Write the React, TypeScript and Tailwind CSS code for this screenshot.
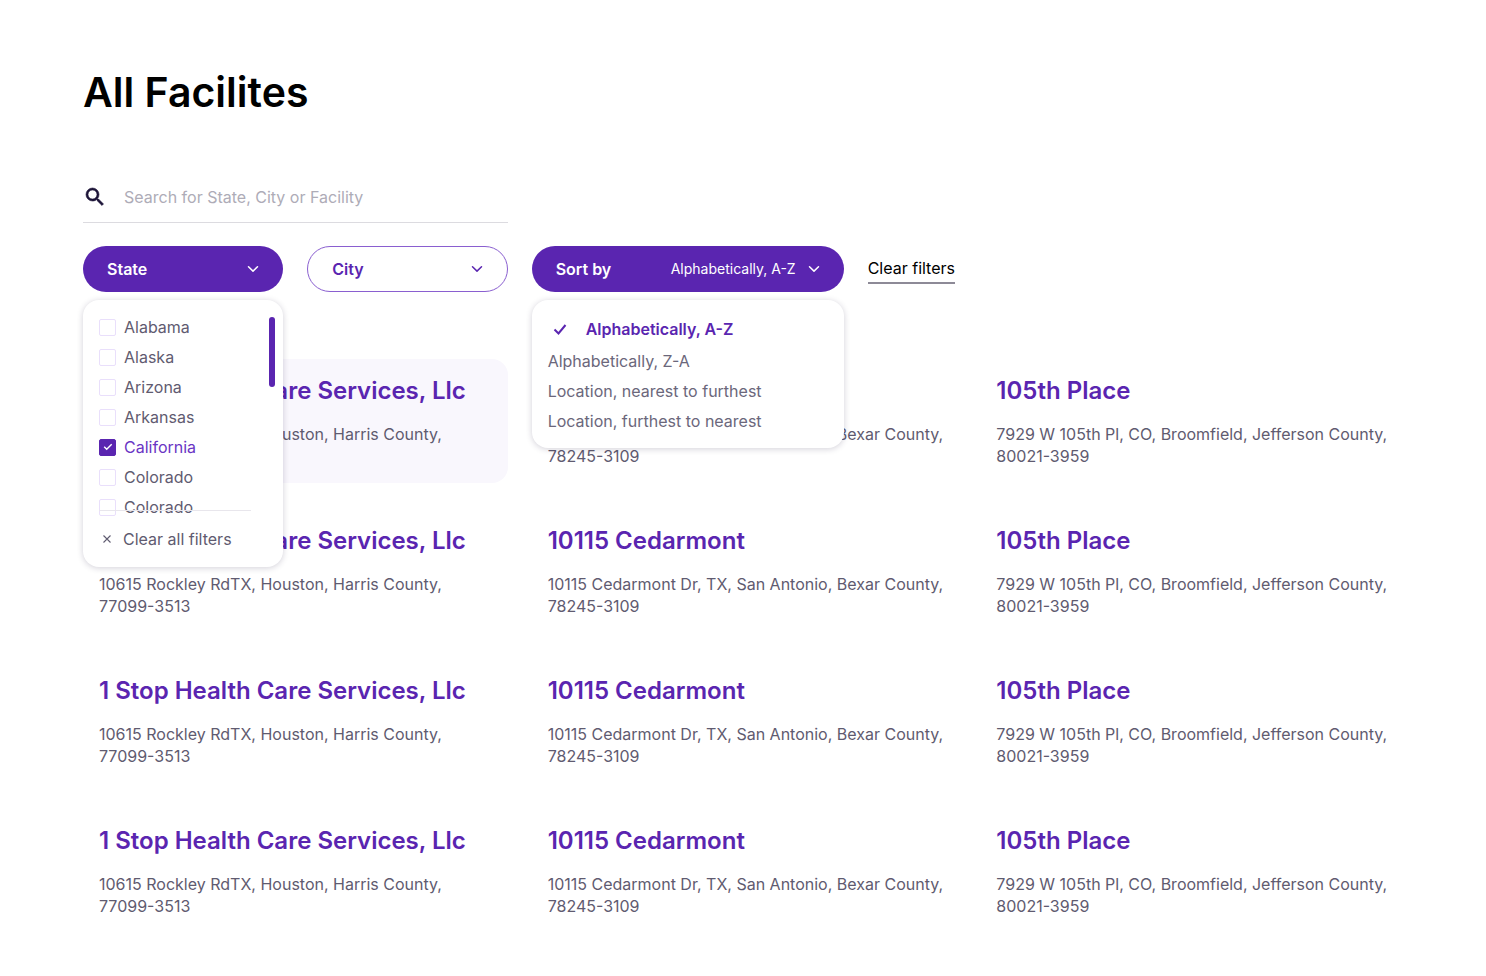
import React, { useState } from 'react';

interface Facility {
    name: string;
    address: string;
    zip: string;
}

const FACILITIES: Facility[] = [
    { name: '1 Stop Health Care Services, Llc', address: '10615 Rockley RdTX, Houston, Harris County,', zip: '77099-3513' },
    { name: '10115 Cedarmont', address: '10115 Cedarmont Dr, TX, San Antonio, Bexar County,', zip: '78245-3109' },
    { name: '105th Place', address: '7929 W 105th Pl, CO, Broomfield, Jefferson County,', zip: '80021-3959' },
];

const ROWS = [0, 1, 2, 3];

const STATES = ['Alabama', 'Alaska', 'Arizona', 'Arkansas', 'California', 'Colorado', 'Colorado'];

const SORT_OPTIONS = [
    'Alphabetically, A-Z',
    'Alphabetically, Z-A',
    'Location, nearest to furthest',
    'Location, furthest to nearest',
];

const ChevronIcon: React.FC = () => (
    <svg viewBox="0 0 12 8" className="w-3 h-2 shrink-0" fill="none" stroke="currentColor" strokeWidth="1.5" strokeLinecap="round" strokeLinejoin="round" aria-hidden="true">
        <path d="M1.5 1.8 6 6.1l4.5-4.3" />
    </svg>
);

const SearchIcon: React.FC = () => (
    <svg viewBox="0 0 24 24" className="w-6 h-6 shrink-0 text-[#1d1438]" fill="currentColor" stroke="currentColor" strokeWidth="0.6" aria-hidden="true">
        <path d="M15.5 14h-.79l-.28-.27A6.47 6.47 0 0 0 16 9.5 6.5 6.5 0 1 0 9.5 16c1.61 0 3.09-.59 4.23-1.57l.27.28v.79l5 4.99L20.49 19l-4.99-5zm-6 0C7.01 14 5 11.99 5 9.5S7.01 5 9.5 5 14 7.01 14 9.5 11.99 14 9.5 14z" />
    </svg>
);

const StateFilter: React.FC = () => {
    const [open, setOpen] = useState(true);
    const [checked, setChecked] = useState<number[]>([4]);

    const toggle = (index: number) => {
        setChecked(prev => (prev.includes(index) ? prev.filter(i => i !== index) : [...prev, index]));
    };

    return (
        <div className="relative">
            <button onClick={() => setOpen(!open)} aria-expanded={open} className="flex h-[46px] w-full items-center justify-between rounded-full bg-[#5a25b0] px-6 text-base font-semibold text-white">
                State
                <ChevronIcon />
            </button>
            {open && (
                <div className="absolute inset-x-0 top-full z-10 mt-2 rounded-2xl bg-white px-4 pt-3 pb-4 shadow-[0_1px_6px_rgba(30,20,60,0.2)]">
                    <div className="flex h-[204px] items-start justify-between overflow-hidden">
                        <ul>
                            {STATES.map((state, index) => (
                                <li key={index}>
                                    <label className="flex h-[30px] cursor-pointer items-center gap-2 text-base text-[#5f5b70] has-checked:text-[#6a35c4]">
                                        <span className="grid h-[17px] w-[17px] place-items-center">
                                            <input
                                                type="checkbox"
                                                checked={checked.includes(index)}
                                                onChange={() => toggle(index)}
                                                className="col-start-1 row-start-1 h-[17px] w-[17px] appearance-none rounded-xs border border-[#e9dffb] bg-white checked:border-[#5a25b0] checked:bg-[#5a25b0]"
                                            />
                                            {checked.includes(index) && (
                                                <svg viewBox="0 0 10 8" className="pointer-events-none col-start-1 row-start-1 h-2 w-[10px] text-white" fill="none" stroke="currentColor" strokeWidth="1.4" aria-hidden="true">
                                                    <path d="m1.2 3.8 2.5 2.5 5-5" />
                                                </svg>
                                            )}
                                        </span>
                                        {state}
                                    </label>
                                </li>
                            ))}
                        </ul>
                    </div>
                    <div className="absolute top-[17px] right-2 h-[70px] w-1.5 rounded-full bg-[#5a25b0]" />
                    <div className="relative -mt-1.5 mr-4 border-t border-[#e8e6ec] pt-4">
                        <button onClick={() => setChecked([])} className="flex h-6 items-center gap-3 whitespace-nowrap pl-1 text-base text-[#5f5b70]">
                            <svg viewBox="0 0 8 8" className="h-2 w-2" fill="none" stroke="currentColor" strokeWidth="1.1" aria-hidden="true">
                                <path d="m.5.5 7 7m0-7-7 7" />
                            </svg>
                            Clear all filters
                        </button>
                    </div>
                </div>
            )}
        </div>
    );
};

const SortMenu: React.FC = () => {
    const [open, setOpen] = useState(true);
    const [selected, setSelected] = useState(0);

    return (
        <div className="relative w-[312px]">
            <button onClick={() => setOpen(!open)} aria-expanded={open} className="flex h-[46px] w-full items-center justify-between rounded-full bg-[#5a25b0] px-6 text-white">
                <span className="text-base font-semibold">Sort by</span>
                <span className="flex items-center gap-3 text-sm">
                    {SORT_OPTIONS[selected]}
                    <ChevronIcon />
                </span>
            </button>
            {open && (
                <ul className="absolute inset-x-0 top-full z-10 mt-2 rounded-2xl bg-white px-4 pt-3 pb-3 shadow-[0_1px_6px_rgba(30,20,60,0.2)]">
                    {SORT_OPTIONS.map((option, index) => (
                        <li key={option}>
                            {index === selected ? (
                                <button className="flex h-[34px] w-full items-center gap-[18px] pl-1 text-base font-semibold text-[#5a25b0]">
                                    <svg viewBox="0 0 16 14" className="h-[14px] w-4" fill="none" stroke="currentColor" strokeWidth="2" aria-hidden="true">
                                        <path d="m2.5 7.5 4 4 7-8.5" />
                                    </svg>
                                    {option}
                                </button>
                            ) : (
                                <button onClick={() => setSelected(index)} className="flex h-[30px] w-full items-center text-base text-[#6b677b]">
                                    {option}
                                </button>
                            )}
                        </li>
                    ))}
                </ul>
            )}
        </div>
    );
};

const FacilityCard: React.FC<{ facility: Facility; active: boolean }> = ({ facility, active }) => (
    <article className={`rounded-2xl p-4 ${active ? 'bg-[#f9f7fd]' : ''}`}>
        <h2 className="whitespace-nowrap text-2xl leading-8 font-semibold text-[#5a25b0]">
            <a href="#facility">{facility.name}</a>
        </h2>
        <p className="mt-4 whitespace-nowrap text-base leading-[22px] text-[#5f5b70]">
            {facility.address}
            <br />
            {facility.zip}
        </p>
    </article>
);

const App: React.FC = () => {
    const [query, setQuery] = useState('');

    return (
        <main className="min-h-screen bg-white pt-16 pr-[81px] pb-14 pl-[83px] font-['Inter',sans-serif]">
            <h1 className="text-[41px] leading-[56px] font-semibold text-black">All Facilites</h1>

            <div className="mt-[52px] grid grid-cols-3 gap-x-6 gap-y-[23px]">
                <label className="flex h-[51px] items-center gap-[17px] border-b border-[#dcdbe0]">
                    <SearchIcon />
                    <input
                        type="text"
                        value={query}
                        onChange={e => setQuery(e.target.value)}
                        aria-label="Search facilities"
                        placeholder="Search for State, City or Facility"
                        className="w-full text-base text-[#1d1438] outline-none placeholder:text-[#aeacb7]"
                    />
                </label>

                <div className="col-start-1 grid grid-cols-2 gap-6">
                    <StateFilter />
                    <button className="flex h-[46px] w-full items-center justify-between rounded-full border border-[#8a5fd0] px-6 text-base font-semibold text-[#5a25b0]">
                        City
                        <ChevronIcon />
                    </button>
                </div>
                <div className="col-span-2 flex items-center gap-6">
                    <SortMenu />
                    <button className="h-[30px] border-b-2 border-[#8d8a97] text-base text-black">Clear filters</button>
                </div>
            </div>

            <section className="mt-[67px] grid grid-cols-3 gap-x-6 gap-y-[26px]">
                {ROWS.map(row =>
                    FACILITIES.map((facility, col) => (
                        <FacilityCard key={`${row}-${col}`} facility={facility} active={row === 0 && col === 0} />
                    ))
                )}
            </section>
        </main>
    );
};

export default App;
